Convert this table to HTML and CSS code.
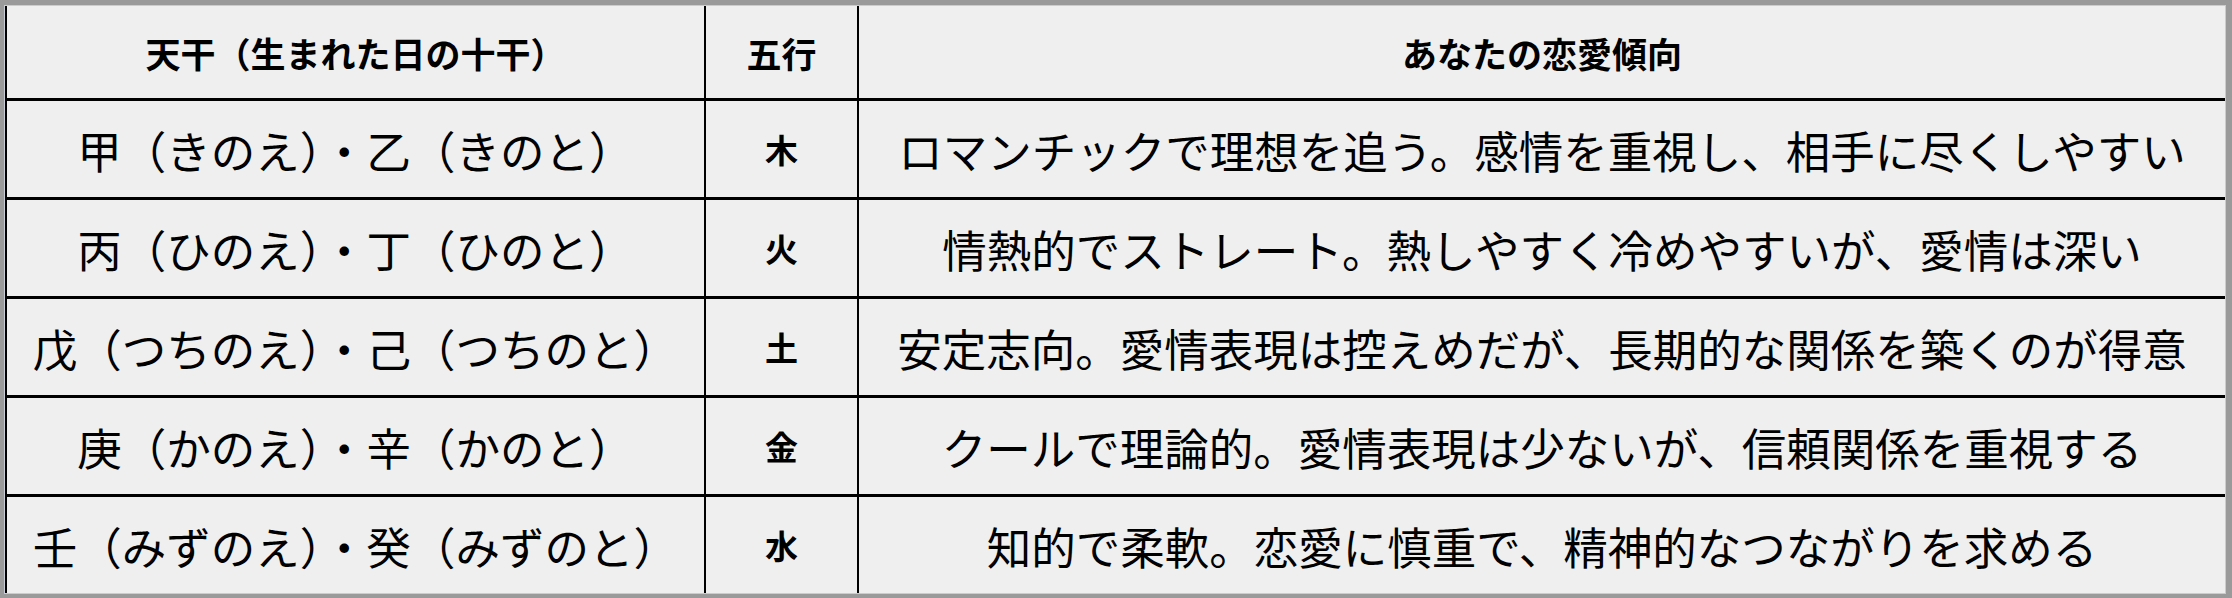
FILE: index.html
```html
<!DOCTYPE html>
<html lang="ja">
<head>
<meta charset="utf-8">
<title>天干と恋愛傾向</title>
<link rel="stylesheet" href="styles.css">
</head>
<body>
<table class="tbl">
  <colgroup>
    <col class="c1">
    <col class="c2">
    <col class="c3">
  </colgroup>
  <thead>
    <tr class="head">
      <th>天干（生まれた日の十干）</th>
      <th>五行</th>
      <th>あなたの恋愛傾向</th>
    </tr>
  </thead>
  <tbody>
    <tr>
      <td class="stem">甲（きのえ）・乙（きのと）</td>
      <td class="elem">木</td>
      <td class="desc">ロマンチックで理想を追う。感情を重視し、相手に尽くしやすい</td>
    </tr>
    <tr>
      <td class="stem">丙（ひのえ）・丁（ひのと）</td>
      <td class="elem">火</td>
      <td class="desc">情熱的でストレート。熱しやすく冷めやすいが、愛情は深い</td>
    </tr>
    <tr>
      <td class="stem">戊（つちのえ）・己（つちのと）</td>
      <td class="elem">土</td>
      <td class="desc">安定志向。愛情表現は控えめだが、長期的な関係を築くのが得意</td>
    </tr>
    <tr>
      <td class="stem">庚（かのえ）・辛（かのと）</td>
      <td class="elem">金</td>
      <td class="desc">クールで理論的。愛情表現は少ないが、信頼関係を重視する</td>
    </tr>
    <tr>
      <td class="stem">壬（みずのえ）・癸（みずのと）</td>
      <td class="elem">水</td>
      <td class="desc">知的で柔軟。恋愛に慎重で、精神的なつながりを求める</td>
    </tr>
  </tbody>
</table>
</body>
</html>
```
FILE: styles.css
```css
html, body {
  margin: 0;
  padding: 0;
  background: #9a9a9a;
}
body {
  padding: 5px 6px 4px 4px;
  font-family: "Noto Sans CJK JP", "Noto Sans", sans-serif;
  color: #000;
}
.tbl {
  width: 2222px;
  border-collapse: separate;
  border-spacing: 0;
  border: 1px solid #c8ccd4;
  background: #efefef;
  table-layout: fixed;
}
.c1 { width: 699px; }
.c2 { width: 153px; }
.c3 { width: auto; }
.tbl th,
.tbl td {
  padding: 0;
  text-align: center;
  vertical-align: middle;
  border-left: 2px solid #000;
  white-space: nowrap;
}
.head th {
  height: 92px;
  font-size: 35px;
  font-weight: 700;
}
.tbl tbody td {
  height: 96px;
  border-top: 3px solid #000;
}
.stem,
.desc {
  font-size: 44.5px;
  font-weight: 400;
}
.elem {
  font-size: 33px;
  font-weight: 700;
}
```
